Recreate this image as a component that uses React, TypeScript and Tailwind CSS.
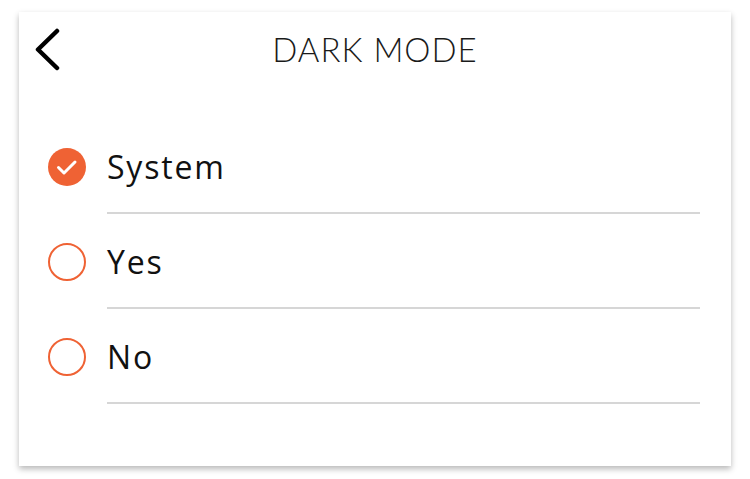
import React, { useState } from "react";

const options = ["System", "Yes", "No"];

export default function App() {
  const [selected, setSelected] = useState<string>("System");

  return (
    <div className="w-[750px] h-[479px] bg-white pt-[12px] pl-[19px]">
      <div className="w-[712px] h-[454px] bg-white shadow-[0_3px_6px_rgba(0,0,0,0.28)]">
        {/* Header */}
        <div className="relative h-[74px] flex items-center justify-center">
          <button className="absolute left-[15px] top-[16px] w-[28px] h-[44px] flex items-center justify-center">
            <svg width="28" height="44" viewBox="0 0 28 44" fill="none">
              <path d="M23 3 L4 21.5 L23 40" stroke="#000" strokeWidth="4.5" strokeLinecap="round" strokeLinejoin="round" />
            </svg>
          </button>
          <h1 className="text-[33px] font-light text-[#1a1a1a] tracking-[1px] mt-[1px]" style={{ fontFamily: "Lato, 'Open Sans', sans-serif" }}>
            DARK MODE
          </h1>
        </div>

        {/* Options */}
        <div className="pt-[33px] pl-[29px] pr-[31px]">
          {options.map(option => (
            <div key={option} className="flex items-center cursor-pointer" onClick={() => setSelected(option)}>
              {selected === option ? (
                <div className="w-[38px] h-[38px] rounded-full bg-[#ef6234] shrink-0">
                  <svg width="38" height="38" viewBox="0 0 38 38" fill="none">
                    <path d="M10.5 19.5 L16 25 L27 14" stroke="#fff" strokeWidth="3" strokeLinecap="round" strokeLinejoin="round" />
                  </svg>
                </div>
              ) : (
                <div className="w-[38px] h-[38px] rounded-full border-2 border-[#ef6234] shrink-0" />
              )}
              <div className="ml-[21px] flex-1 h-[95px] flex items-center border-b-2 border-[#d6d6d6]">
                <span className="text-[32px] text-[#111] pt-[2px] tracking-[1.8px]" style={{ fontFamily: "'Open Sans', sans-serif" }}>{option}</span>
              </div>
            </div>
          ))}
        </div>
      </div>
    </div>
  );
}
